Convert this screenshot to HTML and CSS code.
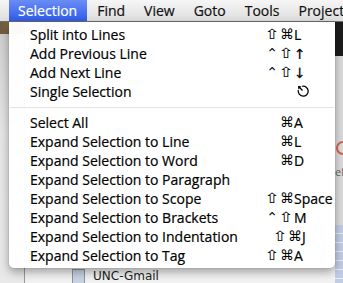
FILE: index.html
```html
<!DOCTYPE html>
<html>
<head>
<meta charset="utf-8">
<link rel="stylesheet" href="styles.css">
</head>
<body>
<div class="screen">
  <div class="menubar">
    <span class="title active">Selection</span>
    <span class="title">Find</span>
    <span class="title">View</span>
    <span class="title">Goto</span>
    <span class="title">Tools</span>
    <span class="title">Project</span>
  </div>
  <div class="desk">
    <div class="col-left">
      <div class="brown"></div>
      <div class="grey"></div>
    </div>
    <div class="col-mid">
      <div class="file-row">
        <span class="file-icon"></span>
        <span class="file-name">UNC-Gmail</span>
      </div>
    </div>
    <div class="col-right">
      <div class="dark"></div>
      <div class="light">
        <span class="red-dot"></span>
        <span class="el">el</span>
      </div>
      <div class="blue"></div>
    </div>
  </div>

  <div class="menu">
    <div class="item"><span class="label">Split into Lines</span><span class="mods"><i class="sh">⇧</i><i class="cm">⌘</i></span><span class="key">L</span></div>
    <div class="item"><span class="label">Add Previous Line</span><span class="mods"><i class="ct">⌃</i><i class="sh">⇧</i></span><span class="key">↑</span></div>
    <div class="item"><span class="label">Add Next Line</span><span class="mods"><i class="ct">⌃</i><i class="sh">⇧</i></span><span class="key">↓</span></div>
    <div class="item"><span class="label">Single Selection</span><span class="mods"></span><span class="key"><svg class="esc" width="13" height="13" viewBox="0 0 13 13"><path d="M5.2 1.3 A5 5 0 1 1 1.3 5.2" fill="none" stroke="#000" stroke-width="1.3"/><path d="M1.5 1.5 L5.5 5.5" stroke="#000" stroke-width="1.3"/><path d="M1 1 L4.6 1.4 L1.4 4.6 Z" fill="#000"/></svg></span></div>
    <div class="sep"></div>
    <div class="item"><span class="label">Select All</span><span class="mods"><i class="cm">⌘</i></span><span class="key">A</span></div>
    <div class="item"><span class="label">Expand Selection to Line</span><span class="mods"><i class="cm">⌘</i></span><span class="key">L</span></div>
    <div class="item"><span class="label">Expand Selection to Word</span><span class="mods"><i class="cm">⌘</i></span><span class="key">D</span></div>
    <div class="item"><span class="label">Expand Selection to Paragraph</span><span class="mods"></span><span class="key"></span></div>
    <div class="item"><span class="label">Expand Selection to Scope</span><span class="mods"><i class="sh">⇧</i><i class="cm">⌘</i></span><span class="key">Space</span></div>
    <div class="item"><span class="label">Expand Selection to Brackets</span><span class="mods"><i class="ct">⌃</i><i class="sh">⇧</i></span><span class="key">M</span></div>
    <div class="item"><span class="label">Expand Selection to Indentation</span><span class="mods"><i class="sh">⇧</i><i class="cm">⌘</i></span><span class="key">J</span></div>
    <div class="item"><span class="label">Expand Selection to Tag</span><span class="mods"><i class="sh">⇧</i><i class="cm">⌘</i></span><span class="key">A</span></div>
  </div>
</div>
</body>
</html>
```
FILE: styles.css
```css
html, body {
  margin: 0;
  padding: 0;
}
body {
  width: 343px;
  height: 283px;
  overflow: hidden;
  font-family: "Open Sans", "DejaVu Sans", sans-serif;
  color: #000;
}
.screen {
  position: relative;
  width: 343px;
  height: 283px;
  display: flex;
  flex-direction: column;
}
.menubar {
  height: 21px;
  flex: none;
  display: flex;
  align-items: stretch;
  padding-left: 9px;
  background: linear-gradient(#f6f6f6, #dedede);
  border-bottom: 1px solid #6e6e6e;
  white-space: nowrap;
  overflow: hidden;
}
.title {
  font-size: 14px;
  line-height: 21px;
  padding: 0 9px 0 9px;
  margin-right: 1px;
  color: #111;
  -webkit-text-stroke: 0.2px #111;
}
.title.active {
  background: linear-gradient(#6a8cf5, #2e5ce9);
  color: #fff;
  -webkit-text-stroke: 0.2px #fff;
  padding: 0 10px 0 9px;
}
.desk {
  flex: 1;
  display: flex;
}
.col-left {
  width: 24px;
  display: flex;
  flex-direction: column;
  border-right: 1px solid #9a9a9a;
}
.brown {
  height: 12px;
  background: linear-gradient(90deg, #6e5c3c, #8a7650);
}
.grey {
  flex: 1;
  background: linear-gradient(#cfcfcf, #e6e6e6 40%, #e9e9e9);
}
.col-mid {
  flex: 1;
  background: #f2f2f2;
  display: flex;
  flex-direction: column;
  justify-content: flex-end;
}
.file-row {
  display: flex;
  align-items: center;
  gap: 8px;
  padding-left: 47px;
  height: 18px;
  margin-bottom: -2px;
}
.file-icon {
  width: 11px;
  height: 13px;
  background: #c9d3e2;
  border: 1px solid #8c96a8;
}
.file-name {
  font-family: "DejaVu Sans", sans-serif;
  font-size: 12px;
  line-height: 14px;
  color: #222;
}
.col-right {
  width: 8px;
  display: flex;
  flex-direction: column;
}
.dark {
  height: 34px;
  background: #1c1c1c;
}
.light {
  flex: 1;
  background: #dcdcdc;
  position: relative;
  overflow: hidden;
}
.red-dot {
  position: absolute;
  left: 1px;
  top: 85px;
  width: 10px;
  height: 10px;
  border: 2px solid #d9614f;
  border-radius: 50%;
}
.el {
  position: absolute;
  left: 0;
  top: 108px;
  font-size: 11px;
  color: #666;
}
.blue {
  height: 58px;
  background: repeating-linear-gradient(#c2cce6 0 8px, #e9edf6 8px 9px);
}
.menu {
  position: absolute;
  left: 9px;
  top: 22px;
  width: 326px;
  padding: 3px 0 3px 0;
  background: rgba(255, 255, 255, 0.97);
  border-radius: 0 0 5px 5px;
  box-shadow: 0 4px 10px rgba(0, 0, 0, 0.35), 0 0 1px rgba(0, 0, 0, 0.4);
}
.item {
  height: 19px;
  display: grid;
  grid-template-columns: 1fr 62px 43px;
  align-items: center;
  padding-left: 21px;
  font-size: 14px;
  line-height: 19px;
  white-space: nowrap;
  -webkit-text-stroke: 0.2px #000;
}
.mods {
  display: flex;
  justify-content: flex-end;
  align-items: center;
  gap: 2px;
  font-family: "DejaVu Sans", sans-serif;
  font-size: 14px;
  -webkit-text-stroke: 0;
}
.mods i {
  font-style: normal;
  display: inline-block;
  text-align: center;
}
.sh {
  width: 12px;
  transform: scaleX(1.3);
}
.cm {
  width: 12px;
}
.ct {
  width: 12px;
}
.key {
  padding-left: 2px;
  display: flex;
  align-items: center;
}
.esc {
  margin-left: 3px;
}
.sep {
  height: 12px;
  display: flex;
  align-items: center;
}
.sep::before {
  content: "";
  flex: 1;
  height: 1px;
  margin: 0 1px;
  background: #e2e2e2;
}
```
